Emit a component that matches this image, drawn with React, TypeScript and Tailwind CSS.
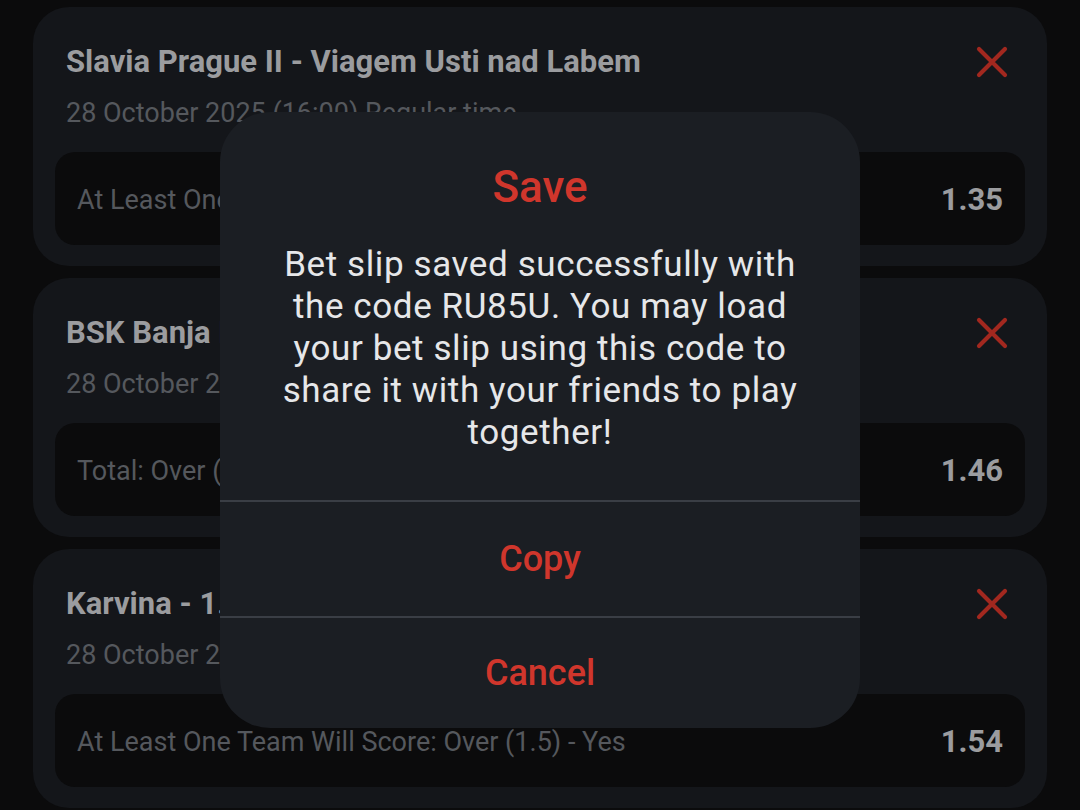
import React from "react";

type Bet = {
  match: string;
  date: string;
  market: string;
  odds: string;
};

const bets: Bet[] = [
  {
    match: "Slavia Prague II - Viagem Usti nad Labem",
    date: "28 October 2025 (16:00) Regular time",
    market: "At Least One Team Will Score: Over (1.5) - Yes",
    odds: "1.35",
  },
  {
    match: "BSK Banja Luka - Sloboda Tuzla",
    date: "28 October 2025 (16:00) Regular time",
    market: "Total: Over (2.5)",
    odds: "1.46",
  },
  {
    match: "Karvina - 1. FC Slovacko",
    date: "28 October 2025 (16:00) Regular time",
    market: "At Least One Team Will Score: Over (1.5) - Yes",
    odds: "1.54",
  },
];

const CloseIcon = () => (
  <svg width="32" height="32" viewBox="0 0 32 32" fill="none">
    <path
      d="M3 3L29 29M29 3L3 29"
      stroke="#a2281f"
      strokeWidth="4.2"
      strokeLinecap="round"
    />
  </svg>
);

const BetCard = ({ bet }: { bet: Bet }) => {
  return (
    <div className="h-[259px] shrink-0 rounded-[36px] bg-[#14161a] px-[22px] pt-[37px]">
      <div className="flex items-start justify-between pl-[11px] pr-[17px]">
        <div>
          <div className="text-[31px] font-bold leading-[36px] text-[#9b9c9f] whitespace-nowrap">
            {bet.match}
          </div>
          <div className="mt-[17px] text-[27px] leading-[32px] text-[#55585d] whitespace-nowrap">
            {bet.date}
          </div>
        </div>
        <div className="pt-[2px]">
          <CloseIcon />
        </div>
      </div>
      <div className="mt-[23px] flex h-[93px] items-center justify-between rounded-[20px] bg-[#0b0b0c] px-[22px] pt-[3px]">
        <span className="text-[27px] text-[#55585d]">{bet.market}</span>
        <span className="text-[31px] font-bold text-[#9b9c9f]">{bet.odds}</span>
      </div>
    </div>
  );
};

const SaveDialog = () => {
  return (
    <div className="absolute left-[220px] top-[112px] w-[640px] h-[616px] rounded-[50px] bg-[#1b1e23] flex flex-col overflow-hidden">
      <div className="pt-[49px] pb-[46px] px-[55px] text-center">
        <div className="text-[44px] font-medium leading-[52px] text-[#d0362c]">
          Save
        </div>
        <p className="mt-[31px] text-[35px] leading-[42px] tracking-[0.6px] text-[#e6e7e9]">
          Bet slip saved successfully with the code RU85U. You may load your bet
          slip using this code to share it with your friends to play together!
        </p>
      </div>
      <div className="h-[2px] bg-[#3a3e45]" />
      <button className="h-[114px] text-[36px] font-medium text-[#d0362c]">
        Copy
      </button>
      <div className="h-[2px] bg-[#3a3e45]" />
      <button className="flex-1 text-[36px] font-medium text-[#d0362c]">
        Cancel
      </button>
    </div>
  );
};

export default function App() {
  return (
    <div
      className="relative h-[810px] w-[1080px] overflow-hidden bg-[#0b0b0c]"
      style={{ fontFamily: "Roboto, 'Noto Sans', sans-serif" }}
    >
      <div className="flex flex-col gap-[12px] px-[33px] pt-[7px]">
        {bets.map((bet) => (
          <BetCard key={bet.odds} bet={bet} />
        ))}
      </div>
      <SaveDialog />
    </div>
  );
}
